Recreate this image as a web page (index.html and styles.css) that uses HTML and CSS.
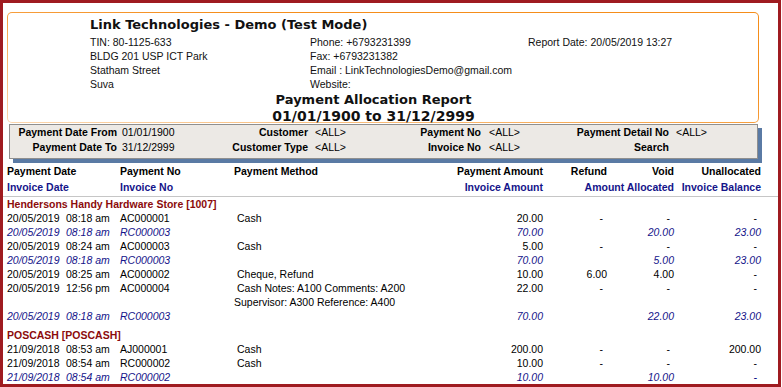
FILE: index.html
```html
<!DOCTYPE html>
<html>
<head>
<meta charset="utf-8">
<link rel="stylesheet" href="styles.css">
</head>
<body>
<div class="frame">
  <div class="company">
    <div class="company-body">
      <div class="company-info">
        <div class="company-name">Link Technologies - Demo (Test Mode)</div>
        <div class="address">
          <div>TIN: 80-1125-633</div><div>Phone: +6793231399</div><div>Report Date: 20/05/2019 13:27</div>
          <div>BLDG 201 USP ICT Park</div><div>Fax: +6793231382</div><div></div>
          <div>Statham Street</div><div>Email : LinkTechnologiesDemo@gmail.com</div><div></div>
          <div>Suva</div><div>Website:</div><div></div>
        </div>
      </div>
      <div class="report-title">Payment Allocation Report</div>
      <div class="report-range">01/01/1900 to 31/12/2999</div>
    </div>
  </div>

  <div class="filters">
    <div class="f-label">Payment Date From</div><div class="f-value v1">01/01/1900</div>
    <div class="f-label">Customer</div><div class="f-value v2">&lt;ALL&gt;</div>
    <div class="f-label">Payment No</div><div class="f-value v3">&lt;ALL&gt;</div>
    <div class="f-label">Payment Detail No</div><div class="f-value v4">&lt;ALL&gt;</div>
    <div class="f-label">Payment Date To</div><div class="f-value v1">31/12/2999</div>
    <div class="f-label">Customer Type</div><div class="f-value v2">&lt;ALL&gt;</div>
    <div class="f-label">Invoice No</div><div class="f-value v3">&lt;ALL&gt;</div>
    <div class="f-label">Search</div><div class="f-value v4"></div>
  </div>

  <div class="col-head">
    <div class="row head1">
      <div class="span2">Payment Date</div>
      <div>Payment No</div>
      <div>Payment Method</div>
      <div class="num">Payment Amount</div>
      <div class="num">Refund</div>
      <div class="num">Void</div>
      <div class="num">Unallocated</div>
    </div>
    <div class="row head2">
      <div class="span2">Invoice Date</div>
      <div>Invoice No</div>
      <div></div>
      <div class="num">Invoice Amount</div>
      <div class="num span2">Amount Allocated</div>
      <div class="num">Invoice Balance</div>
    </div>
  </div>

  <div class="group">
    <div class="group-name">Hendersons Handy Hardware Store [1007]</div>
    <div class="row">
      <div>20/05/2019</div><div>08:18 am</div><div>AC000001</div><div class="method">Cash</div>
      <div class="num">20.00</div><div class="num d">-</div><div class="num d">-</div><div class="num d">-</div>
    </div>
    <div class="row inv">
      <div>20/05/2019</div><div>08:18 am</div><div>RC000003</div><div></div>
      <div class="num">70.00</div><div></div><div class="num">20.00</div><div class="num">23.00</div>
    </div>
    <div class="row">
      <div>20/05/2019</div><div>08:24 am</div><div>AC000003</div><div class="method">Cash</div>
      <div class="num">5.00</div><div class="num d">-</div><div class="num d">-</div><div class="num d">-</div>
    </div>
    <div class="row inv">
      <div>20/05/2019</div><div>08:18 am</div><div>RC000003</div><div></div>
      <div class="num">70.00</div><div></div><div class="num">5.00</div><div class="num">23.00</div>
    </div>
    <div class="row">
      <div>20/05/2019</div><div>08:25 am</div><div>AC000002</div><div class="method">Cheque, Refund</div>
      <div class="num">10.00</div><div class="num">6.00</div><div class="num">4.00</div><div class="num d">-</div>
    </div>
    <div class="row">
      <div>20/05/2019</div><div>12:56 pm</div><div>AC000004</div><div class="method">Cash Notes: A100 Comments: A200<br>Supervisor: A300 Reference: A400</div>
      <div class="num">22.00</div><div class="num d">-</div><div class="num d">-</div><div class="num d">-</div>
    </div>
    <div class="row inv">
      <div>20/05/2019</div><div>08:18 am</div><div>RC000003</div><div></div>
      <div class="num">70.00</div><div></div><div class="num">22.00</div><div class="num">23.00</div>
    </div>
  </div>

  <div class="group group-next">
    <div class="group-name">POSCASH [POSCASH]</div>
    <div class="row">
      <div>21/09/2018</div><div>08:53 am</div><div>AJ000001</div><div class="method">Cash</div>
      <div class="num">200.00</div><div class="num d">-</div><div class="num d">-</div><div class="num">200.00</div>
    </div>
    <div class="row">
      <div>21/09/2018</div><div>08:54 am</div><div>RC000002</div><div class="method">Cash</div>
      <div class="num">10.00</div><div class="num d">-</div><div class="num d">-</div><div class="num d">-</div>
    </div>
    <div class="row inv">
      <div>21/09/2018</div><div>08:54 am</div><div>RC000002</div><div></div>
      <div class="num">10.00</div><div></div><div class="num">10.00</div><div class="num d">-</div>
    </div>
  </div>
</div>
</body>
</html>
```
FILE: styles.css
```css
html, body {
  margin: 0;
  padding: 0;
  background: #ffffff;
}

body {
  font-family: "Liberation Sans", Arial, sans-serif;
  font-size: 10.5px;
  color: #000000;
}

.frame {
  width: 781px;
  height: 387px;
  box-sizing: border-box;
  border: 3px solid #9f1b20;
  overflow: hidden;
  background: #ffffff;
}

/* company header box with orange rounded outline */
.company {
  margin: 9px 0 0 4px;
  width: 752px;
  height: 111px;
  box-sizing: border-box;
  padding: 1px;
  border-radius: 5px;
  background: linear-gradient(to bottom left, #f58d1a 35%, #fbd6ae 100%);
}

.company-body {
  height: 109px;
  background: #ffffff;
  border-radius: 4px;
}

.company-info {
  padding-left: 82px;
}

.company-name {
  font-family: "DejaVu Sans", Verdana, sans-serif;
  font-weight: bold;
  font-size: 13px;
  line-height: 20px;
  padding-top: 2px;
  color: #111111;
}

.address {
  display: grid;
  grid-template-columns: 220px 218px 1fr;
  line-height: 14px;
  color: #111111;
}

.report-title,
.report-range {
  font-family: "DejaVu Sans", Verdana, sans-serif;
  font-weight: bold;
  text-align: center;
  padding-right: 19px;
  line-height: 16px;
  color: #111111;
}

.report-title {
  font-size: 13px;
  margin-top: 1px;
}

.report-range {
  font-size: 14px;
}

/* filter panel */
.filters {
  margin: 1px 0 0 6px;
  width: 749px;
  box-sizing: border-box;
  background: #ece9e5;
  border: 1px solid #8f8f8f;
  box-shadow: 4px 4px 0 #5a7aa4;
  display: grid;
  grid-template-columns: 107px 108px 83px 92px 81px 79px 109px 1fr;
  line-height: 15px;
  padding-bottom: 3px;
}

.f-label {
  font-weight: bold;
  text-align: right;
  white-space: nowrap;
}

.f-value {
  white-space: nowrap;
}

.v1 { padding-left: 5px; }
.v2 { padding-left: 7px; }
.v3 { padding-left: 8px; }
.v4 { padding-left: 7px; }

/* column headers */
.col-head {
  margin-top: 5px;
  padding-left: 4px;
  border-bottom: 1px solid #c6c6c6;
  font-weight: bold;
}

.row {
  display: grid;
  grid-template-columns: 59px 54px 114px 209px 100px 64px 67px 87px;
  line-height: 14px;
  white-space: nowrap;
}

.head1 {
  line-height: 15px;
}

.head2 {
  line-height: 17px;
  color: #14148a;
}

.span2 {
  grid-column: span 2;
}

.num {
  text-align: right;
}

.d {
  padding-right: 4px;
}

.method {
  text-indent: 3px;
  white-space: normal;
}

/* groups */
.group {
  padding-left: 4px;
}

.group-next {
  margin-top: 5px;
}

.group-name {
  font-weight: bold;
  color: #8c0b0b;
  line-height: 14px;
}

.inv {
  font-style: italic;
  color: #14148a;
}
```
